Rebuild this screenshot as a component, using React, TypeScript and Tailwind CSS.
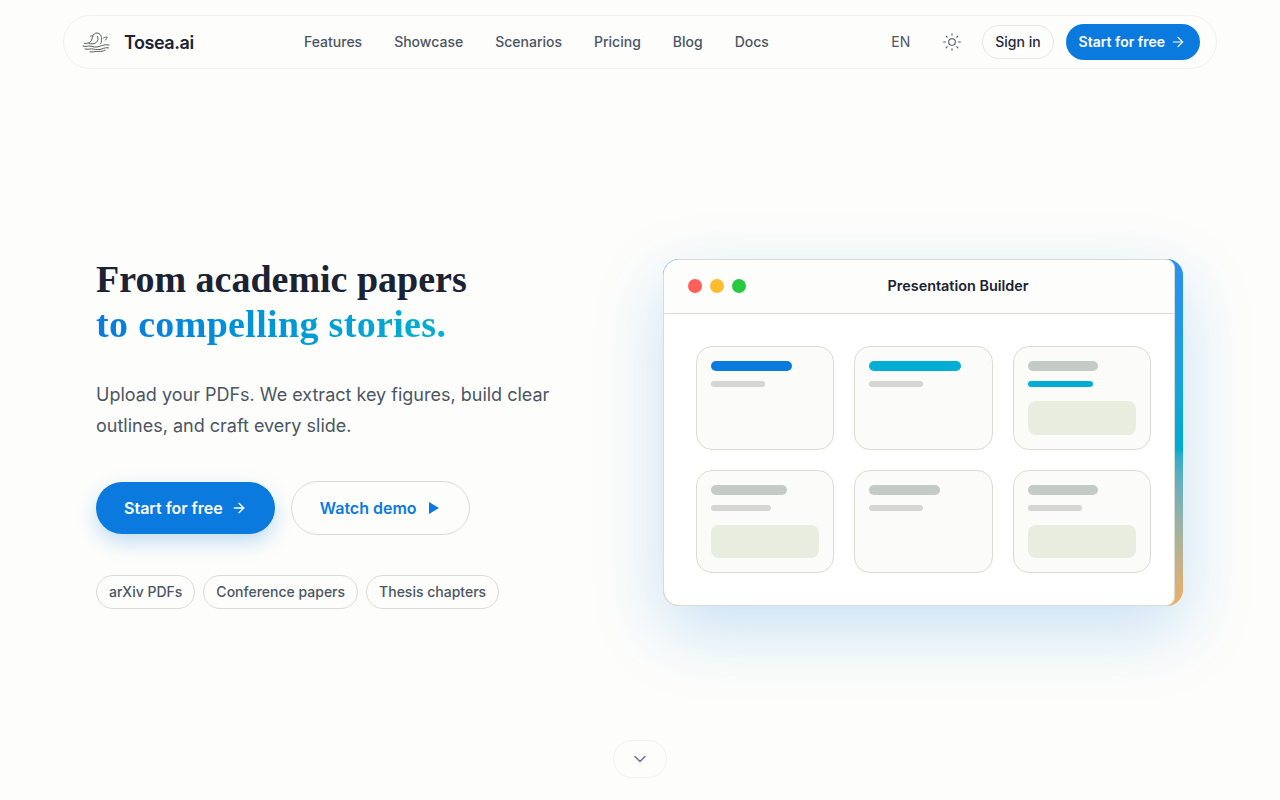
import { ArrowRight, ChevronDown, Sun } from "lucide-react";

const navLinks = ["Features", "Showcase", "Scenarios", "Pricing", "Blog", "Docs"];
const chips = ["arXiv PDFs", "Conference papers", "Thesis chapters"];

interface SlideCard {
  title: string;
  line: string;
  titleColor: string;
  lineColor: string;
  block: boolean;
}

const cards: SlideCard[] = [
  { title: "w-[75%]", line: "w-[50%]", titleColor: "bg-[#0b7adf]", lineColor: "bg-[#d5d6d3]", block: false },
  { title: "w-[85%]", line: "w-[50%]", titleColor: "bg-[#03aed2]", lineColor: "bg-[#d5d6d3]", block: false },
  { title: "w-[65%]", line: "w-[60%]", titleColor: "bg-[#c4cac6]", lineColor: "bg-[#03aed2]", block: true },
  { title: "w-[70%]", line: "w-[55%]", titleColor: "bg-[#c4cac6]", lineColor: "bg-[#d5d6d3]", block: true },
  { title: "w-[65%]", line: "w-[50%]", titleColor: "bg-[#c4cac6]", lineColor: "bg-[#d5d6d3]", block: false },
  { title: "w-[65%]", line: "w-[50%]", titleColor: "bg-[#c4cac6]", lineColor: "bg-[#d5d6d3]", block: true },
];

function Logo() {
  return (
    <svg width="28" height="22" viewBox="0 0 28 22" fill="none" stroke="#5a5d60" strokeWidth="1" strokeLinecap="round" strokeLinejoin="round">
      <path d="M2.500 12.500c2.500.2 5-.6 6.500-2.300 1-1.300 1-3 1.500-4.500C11.200 3.300 13 1.800 15.200 2c2.500.2 4 2.200 4.300 4.500.3 2.200.2 4.300-.8 6" />
      <path d="M11 5c-1-.5-2-.4-2.700.3" />
      <path d="M15.500 5.500c.8 2 .6 4.200-1 5.800-1.800 1.700-5 2-7.500 1.200" />
      <path d="M21.500 7c1.300-.8 2.500-1.100 3.800-.9-.6 1-1 2-1.800 3" />
      <path d="M1 15c3 1.300 5-.6 8 .2s5 1.300 8 .3 6.500-2.500 10-1.500" />
      <path d="M3 18c3 .9 5.500-.6 8.500.1s6 .8 8.500-.2 4-1.500 6.500-1" />
      <path d="M8 20.800c3 .5 5.500-.5 8.500-.3 2.500.1 4.500-.3 6.500-1.300" />
    </svg>
  );
}

function Nav() {
  return (
    <nav className="h-[54px] rounded-[27px] border border-[#f0f0ec] flex items-center pl-[18px] pr-4">
      <div className="w-[222px] flex items-center gap-[14px]">
        <Logo />
        <span className="text-[18px] font-semibold tracking-tight text-[#1a2233]">Tosea.ai</span>
      </div>
      <div className="flex items-center gap-8">
        {navLinks.map((link) => (
          <a key={link} className="text-sm font-medium text-[#4b5563]">
            {link}
          </a>
        ))}
      </div>
      <div className="ml-auto flex items-center">
        <span className="text-sm text-[#4b5563]">EN</span>
        <Sun className="ml-[32px] w-5 h-5 text-[#4b5563]" strokeWidth={1.25} />
        <button className="ml-5 h-[34px] px-3 rounded-full border border-[#e6e6e2] text-sm font-medium text-[#1f2937]">
          Sign in
        </button>
        <button className="ml-3 h-9 pl-[13px] pr-[14px] rounded-full bg-[#0b7adf] text-white text-sm font-semibold flex items-center gap-[5px]">
          Start for free
          <ArrowRight className="w-4 h-4" strokeWidth={1.75} />
        </button>
      </div>
    </nav>
  );
}

function BuilderWindow() {
  return (
    <div className="w-[520px] h-[347px] rounded-2xl pr-2 bg-gradient-to-b from-[#2b8ff2] via-[#00acd0] via-55% to-[#eeae62] shadow-[0_24px_70px_rgba(11,122,223,0.22)]">
      <div className="h-full rounded-l-2xl rounded-r-[9px] bg-white border border-[#dbdad4] overflow-hidden">
        <div className="h-[54px] px-6 pb-px bg-[#fdfdfb] border-b border-[#dbdad4] flex items-center">
          <div className="flex gap-2">
            <span className="w-[14px] h-[14px] rounded-full bg-[#ff5f57]" />
            <span className="w-[14px] h-[14px] rounded-full bg-[#febc2e]" />
            <span className="w-[14px] h-[14px] rounded-full bg-[#28c840]" />
          </div>
          <div className="flex-1 ml-5 text-center text-[14.4px] font-semibold text-[#1a2233]">Presentation Builder</div>
        </div>
        <div className="pt-8 pl-8 pr-[23px] grid grid-cols-3 gap-5">
          {cards.map((card, i) => (
            <div key={i} className="h-[103.5px] rounded-2xl border border-[#dbdad4] bg-[#fbfbf9] p-[14px]">
              <div className={`h-[10px] rounded-full ${card.title} ${card.titleColor}`} />
              <div className={`mt-[10px] h-[6px] rounded-full ${card.line} ${card.lineColor}`} />
              {card.block && <div className="mt-[14px] h-[33.5px] rounded-lg bg-[#e9eddf]" />}
            </div>
          ))}
        </div>
      </div>
    </div>
  );
}

export default function App() {
  return (
    <div className="relative h-[800px] overflow-hidden bg-[#fdfdfb] font-['Inter',sans-serif]">
      <div className="pt-[15px] px-[63px]">
        <Nav />
      </div>

      <main className="pt-[190px] pl-[96px] pr-[97px] flex justify-between">
        <div>
          <h1 className="-mt-[2px] font-['Liberation_Serif',serif] font-bold text-[38px] leading-[45px] text-[#1a2233]">
            From academic papers
            <br />
            <span className="tracking-[0.33px] bg-gradient-to-r from-[#0b7adf] to-[#04b0d0] bg-clip-text text-transparent">to compelling stories.</span>
          </h1>
          <p className="mt-8 w-[480px] text-[18px] leading-[31px] text-[#4b5563]">
            Upload your PDFs. We extract key figures, build clear outlines, and craft every slide.
          </p>
          <div className="mt-10 flex items-center gap-4">
            <button className="h-[52px] px-7 rounded-full bg-[#0b7adf] text-white font-semibold flex items-center gap-2 shadow-[0_8px_20px_rgba(11,122,223,0.25)]">
              Start for free
              <ArrowRight className="w-4 h-4" />
            </button>
            <button className="h-[54px] pl-7 pr-[30px] rounded-full border border-[#dbdad4] text-[#0b7adf] font-semibold flex items-center gap-3">
              Watch demo
              <svg width="10" height="12" viewBox="0 0 10 12" fill="#0b7adf">
                <path d="M0 0l10 6-10 6z" />
              </svg>
            </button>
          </div>
          <div className="mt-10 flex gap-2">
            {chips.map((chip) => (
              <span key={chip} className="h-[34px] px-3 rounded-full border border-[#dbdad4] text-sm font-medium text-[#4b5563] flex items-center">
                {chip}
              </span>
            ))}
          </div>
        </div>
        <BuilderWindow />
      </main>

      <button className="absolute left-[613px] top-[740px] w-[54px] h-[38px] rounded-full border border-[#f0f0ec] flex items-center justify-center text-[#6b7280]">
        <ChevronDown className="w-5 h-5" strokeWidth={1.75} />
      </button>
    </div>
  );
}
